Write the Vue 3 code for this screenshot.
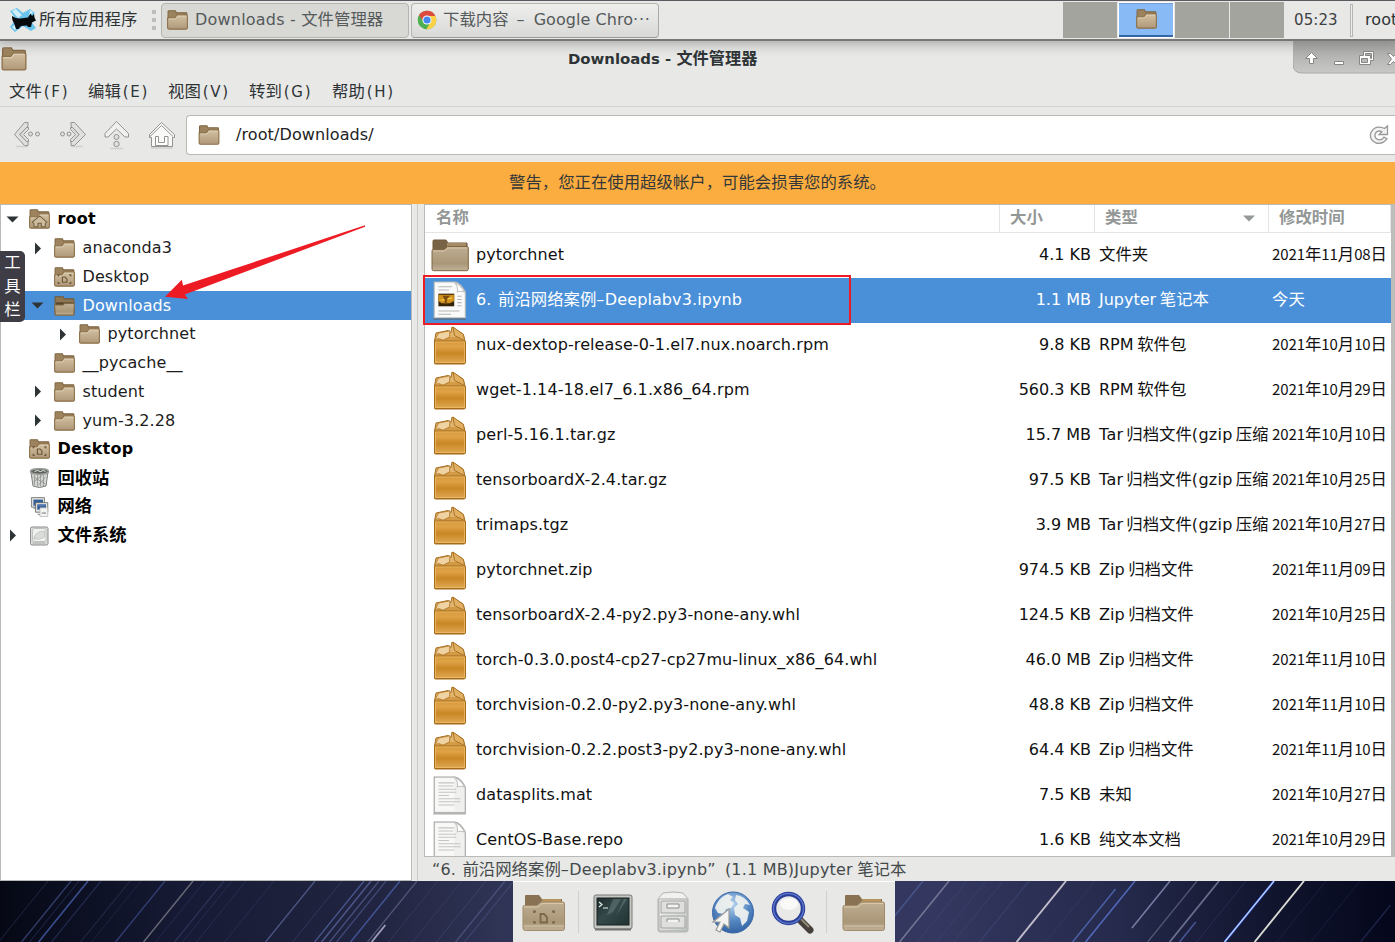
<script setup>
import { h } from 'vue'

// Splits a label into Latin and Han runs so each gets its own face and size.
const Mixed = (props) =>
  h('span', { class: 'mixed' },
    props.t.split(/([\u2e80-\u9fff，。]+)/).filter(Boolean).map((run) =>
      h('span', { class: /[\u2e80-\u9fff，。]/.test(run) ? 'han' : 'lat' }, run)))
Mixed.props = ['t']

const menus = [
  { t: '文件', k: '(F)', w: 79 }, { t: '编辑', k: '(E)', w: 80 }, { t: '视图', k: '(V)', w: 81 },
  { t: '转到', k: '(G)', w: 83 }, { t: '帮助', k: '(H)', w: 80 },
]

const tree = [
  { name: 'root', level: 0, arrow: 'open', icon: 'f-home', bold: true },
  { name: 'anaconda3', level: 1, arrow: 'shut', icon: 'f-small' },
  { name: 'Desktop', level: 1, icon: 'f-desk' },
  { name: 'Downloads', level: 1, arrow: 'open', icon: 'f-open', selected: true },
  { name: 'pytorchnet', level: 2, arrow: 'shut', icon: 'f-small' },
  { name: '__pycache__', level: 1, icon: 'f-small' },
  { name: 'student', level: 1, arrow: 'shut', icon: 'f-small' },
  { name: 'yum-3.2.28', level: 1, arrow: 'shut', icon: 'f-small' },
  { name: 'Desktop', level: 0, icon: 'f-desk', bold: true },
  { name: '回收站', level: 0, icon: 'trash', bold: true },
  { name: '网络', level: 0, icon: 'network', bold: true },
  { name: '文件系统', level: 0, arrow: 'shut', icon: 'disk', bold: true },
]

const tar = 'Tar 归档文件(gzip 压缩'
const zip = 'Zip 归档文件'
const files = [
  ['f-large', 'pytorchnet', '4.1 KB', '文件夹', '2021年11月08日'],
  ['notebook', '', '1.1 MB', 'Jupyter 笔记本', '今天'],
  ['package', 'nux-dextop-release-0-1.el7.nux.noarch.rpm', '9.8 KB', 'RPM 软件包', '2021年10月10日'],
  ['package', 'wget-1.14-18.el7_6.1.x86_64.rpm', '560.3 KB', 'RPM 软件包', '2021年10月29日'],
  ['package', 'perl-5.16.1.tar.gz', '15.7 MB', tar, '2021年10月10日'],
  ['package', 'tensorboardX-2.4.tar.gz', '97.5 KB', tar, '2021年10月25日'],
  ['package', 'trimaps.tgz', '3.9 MB', tar, '2021年10月27日'],
  ['package', 'pytorchnet.zip', '974.5 KB', zip, '2021年11月09日'],
  ['package', 'tensorboardX-2.4-py2.py3-none-any.whl', '124.5 KB', zip, '2021年10月25日'],
  ['package', 'torch-0.3.0.post4-cp27-cp27mu-linux_x86_64.whl', '46.0 MB', zip, '2021年11月10日'],
  ['package', 'torchvision-0.2.0-py2.py3-none-any.whl', '48.8 KB', zip, '2021年11月10日'],
  ['package', 'torchvision-0.2.2.post3-py2.py3-none-any.whl', '64.4 KB', zip, '2021年11月10日'],
  ['paper', 'datasplits.mat', '7.5 KB', '未知', '2021年10月27日'],
  ['paper', 'CentOS-Base.repo', '1.6 KB', '纯文本文档', '2021年10月29日'],
]

// Star trails: x at the top, colour, opacity, width, start y, end y.
const trails = [
  [48, '#39436f', .5, 1, 0, 61], [71, '#46558f', .65, 1.4, 0, 61], [79, '#3b4884', .5, 1, 0, 61], [88, '#4964b4', .75, 1.6, 0, 61],
  [101, '#354379', .5, 1.2, 0, 61], [130, '#434a75', .5, 1, 0, 61], [141, '#363d68', .4, 1, 0, 61], [165, '#4757a0', .65, 1.2, 0, 61],
  [193, '#8d8b94', .7, 1.4, 0, 61], [205, '#343e6b', .5, 1, 0, 61], [224, '#3f4a79', .5, 1.2, 0, 61], [232, '#394575', .4, 1, 0, 61],
  [246, '#3c4678', .4, 1, 0, 61], [274, '#3c4678', .4, 1, 0, 61], [315, '#6673aa', .65, 1.3, 0, 61], [342, '#434c7d', .5, 1, 0, 61],
  [364, '#5567aa', .75, 1.3, 0, 61], [371, '#6572b1', .65, 1.5, 0, 61], [379, '#6873aa', .55, 1.3, 0, 61], [386, '#5462a0', .6, 1.2, 0, 61],
  [400, '#4e65b5', .75, 1.4, 0, 61], [417, '#6a6c92', .65, 1.3, 0, 61], [421, '#c0bddb', .8, 1.8, 44, 61], [438, '#4a4e7c', .4, 1, 0, 61],
  [462, '#484e7b', .4, 1, 0, 61], [486, '#535b8b', .4, 1, 0, 61], [505, '#6570a0', .5, 1.3, 0, 61], [514, '#4c568a', .5, 1.2, 0, 61],
  [923, '#5267a5', .6, 1.5, 0, 61], [949, '#8a89a5', .75, 1.6, 0, 61], [967, '#454d80', .5, 1, 0, 61], [986, '#3f497c', .5, 1, 0, 61],
  [1003, '#444c7f', .5, 1, 0, 61], [1029, '#424f84', .5, 1.2, 0, 61], [1066, '#d0cdd9', .9, 1.9, 0, 61], [1095, '#3b4270', .5, 1, 0, 61],
  [1122, '#5069b5', .85, 1.5, 8, 61], [1135, '#5770c8', .9, 1.5, 0, 61], [1170, '#8d94be', .8, 1.5, 0, 47], [1197, '#6a6c87', .7, 1.3, 0, 61],
  [1219, '#8a8fb0', .7, 1.8, 0, 61], [1229, '#5266ac', .8, 1.5, 41, 61], [1246, '#343d6b', .5, 1, 0, 61], [1274, '#3350df', .8, 2.6, 0, 61],
  [1274, '#c0dcfb', 1, 1.2, 0, 61], [1304, '#e5e5dd', .95, 1.9, 0, 61], [1326, '#252d55', .5, 1, 0, 61], [1360, '#232b52', .5, 1, 0, 61],
  [1410, '#2d3865', .6, 1.2, 24, 61],
]
</script>

<template>
  <div class="screen">
    <svg class="defs" width="0" height="0">
      <defs>
        <linearGradient id="gf" x1="0" y1="0" x2="0" y2="1"><stop offset="0" stop-color="#d3c1a1" /><stop offset="1" stop-color="#af987a" /></linearGradient>
        <linearGradient id="gl" x1="0" y1="0" x2="0" y2="1"><stop offset="0" stop-color="#bfae93" /><stop offset=".7" stop-color="#aa9778" /><stop offset="1" stop-color="#c0b198" /></linearGradient>
        <linearGradient id="gp" x1="0" y1="0" x2="0" y2="1"><stop offset="0" stop-color="#d5983a" /><stop offset=".25" stop-color="#dfa246" /><stop offset=".55" stop-color="#c98725" /><stop offset="1" stop-color="#e0a953" /></linearGradient>
        <linearGradient id="gm" x1="0" y1="0" x2="1" y2="1"><stop offset="0" stop-color="#fdfdfc" /><stop offset="1" stop-color="#c5c8c3" /></linearGradient>
        <linearGradient id="gt" x1="0" y1="0" x2="1" y2="1"><stop offset="0" stop-color="#1d2b2b" /><stop offset=".45" stop-color="#35494a" /><stop offset="1" stop-color="#203333" /></linearGradient>
        <radialGradient id="gg" cx=".5" cy=".3" r=".75"><stop offset="0" stop-color="#b6d2ee" /><stop offset=".55" stop-color="#5486c1" /><stop offset="1" stop-color="#2f5e9f" /></radialGradient>
        <linearGradient id="gn" x1="0" y1="0" x2="1" y2="0"><stop offset="0" stop-color="#050814" /><stop offset=".13" stop-color="#161a34" /><stop offset=".27" stop-color="#222541" /><stop offset=".37" stop-color="#313557" /><stop offset=".67" stop-color="#34375f" /><stop offset=".8" stop-color="#262a4c" /><stop offset=".91" stop-color="#11152e" /><stop offset="1" stop-color="#04071b" /></linearGradient>
        <symbol id="f-small" viewBox="0 0 20 19">
          <path d="M1 17V1.500q0-.8.8-.8h6.200l1 2h9.200q.8 0 .8.8V17z" fill="#9c835e" stroke="#806744" />
          <path d="M.6 7.500h6.900l2-2.700h8.700q1.200 0 1.200 1.200v11q0 1.200-1.200 1.200H1.800Q.6 18.200.6 17V8z" fill="url(#gf)" stroke="#8c7048" />
          <path d="M1.700 8.500H8l2-2.700h8.300" fill="none" stroke="#e0d3bd" stroke-width=".8" />
        </symbol>
        <symbol id="f-home" viewBox="0 0 20 19"><use href="#f-small" /><path d="M3.200 12.500l6.900-6 6.900 6-1.500 1.200v3.100h-3.800v-3.200H8.500v3.200H4.700v-3.100z" fill="#cdbc9f" stroke="#75603f" stroke-width="1" /></symbol>
        <symbol id="f-desk" viewBox="0 0 20 19"><use href="#f-small" /><path d="M4 9V7.500h1.500M14.500 7.500H16V9M4 14v1.500h1.500M14.500 15.500H16V14M8 9.500h2.500l1.800 1.800V14.500H8z" fill="none" stroke="#6c5839" stroke-width="1.100" /></symbol>
        <symbol id="f-open" viewBox="0 0 20 19"><path d="M1 17V1.500q0-.8.8-.8h7l1 2h8.400q.8 0 .8.800V17z" fill="#8e7652" stroke="#705a39" /><path d="M2 6h16v4H2z" fill="#59472d" /><path d="M.6 8.500h8L10 7h9.400l-.6 11.200H1.200z" fill="url(#gl)" stroke="#806945" /></symbol>
        <symbol id="f-large" viewBox="0 0 38 33">
          <path d="M2 30V2q0-1 1-1h12l2 3h19v26z" fill="#796347" stroke="#71593b" /><path d="M16 4h19v4H16z" fill="#a58c66" />
          <path d="M1 12q0-1.500 1.500-1.500H13l3.500-3H36q1.300 0 1.300 1.300V30q0 1.700-1.700 1.700H2.500Q1 31.700 1 30z" fill="url(#gl)" stroke="#80653f" />
          <path d="M2 12h11.500l3.500-3h19" fill="none" stroke="#d3c3a9" />
        </symbol>
        <symbol id="f-dock" viewBox="0 0 44 39">
          <path d="M3 30V3q0-1 1-1h13l3 4h20v24z" fill="#897253" /><path d="M20 6h19v3H20z" fill="#b5945e" />
          <path d="M1 14q0-1.500 1.500-1.500H15l4-3.500h22q1.500 0 1.500 1.500V35q0 2.500-2 2.500H3.500Q1 37.500 1 35z" fill="url(#gl)" stroke="#a08a69" />
          <path d="M2 14h14l4-3.500h21" fill="none" stroke="#dac8a8" /><path d="M2 33h40" stroke="#d3c4ab" />
        </symbol>
        <symbol id="f-dock-desk" viewBox="0 0 44 39"><use href="#f-dock" /><path d="M12 20v-1.500h2M30 18.500h2V20M12 28v1.500h2M30 29.500h2V28M18.500 21h3.500l3 3v5.500h-6.500z" fill="none" stroke="#7b6849" stroke-width="1.800" /></symbol>
        <symbol id="package" viewBox="0 0 34 39">
          <path d="M1.500 15l1.500-8 12-2.500 3 2 1-5.500 11 7 2 7v22q0 1-1 1H2.500q-1 0-1-1z" fill="#e2b671" stroke="#a56d1d" />
          <path d="M4 15l2-4h21l3 4z" fill="#d29a45" />
          <path d="M2 14L5.500 7 17 4.800 16.500 11 10 14.200 5.500 12.500z" fill="#efd3a3" stroke="#b37a2c" stroke-width=".9" />
          <path d="M20 1l10.500 7.500 1 6L21.500 9.500z" fill="#e2b063" stroke="#a56d1d" stroke-width=".9" />
          <rect x="1.500" y="15" width="31" height="22.500" rx="1" fill="url(#gp)" stroke="#a46b1b" /><path d="M2.500 16h29v20.500h-29z" fill="none" stroke="#edbb6b" stroke-width=".8" />
        </symbol>
        <symbol id="paper" viewBox="0 0 34 37">
          <path d="M2 1h20q5 1 9.500 9.500V35H2z" fill="#f0f1ef" stroke="#9fa19e" /><path d="M3 2h18v31H3z" fill="#fff" opacity=".5" /><path d="M21 1.300q4 3 3 9 4-1.500 7 .5-4-8-10-9.500z" fill="#fff" stroke="#c1c3c0" />
          <path d="M6 6.500h15M6 9.500h14M6 12.500h17M6 15.500h17M6 18.500h10M6 21.500h21M6 24.500h21M6 27.500h15" stroke="#c3c5c3" /><path d="M1 36h31" stroke="#777" opacity=".6" />
        </symbol>
        <symbol id="notebook" viewBox="0 0 34 37">
          <path d="M2 1h20q5 1 9.500 9.500V35H2z" fill="#fafafa" stroke="#b9bbb8" /><path d="M21 1.300q4 3 3 9 4-1.500 7 .5-4-8-10-9.500z" fill="#fff" stroke="#c1c3c0" />
          <path d="M6 5.500h13M6 8.500h10M24 14.500h4M24 17.500h4M24 20.500h4M24 23.500h4M6 28.500h20M6 31.500h12" stroke="#b4b6b4" /><path d="M6 12h15v12H6z" fill="#342308" /><path d="M6 13h15v6l-4 2H9l-3-2z" fill="#d0901f" /><path d="M10 14h7l-3 3v5h-2v-4z" fill="#7a4b10" /><path d="M8 18h4M15 17l4-1" stroke="#f7d54b" /><path d="M1 36h31" stroke="#565e66" />
        </symbol>
        <symbol id="trash" viewBox="0 0 20 20"><path d="M1.500 4l2 14q6 3 13 0l2-14z" fill="#d5d7d3" stroke="#7d807c" /><path d="M5 7v10M8 7v11M11 7v11M14 7v11M4 9l12 7M4 14l9-7M9 17l7-8" stroke="#8f928f" stroke-width=".8" /><ellipse cx="10" cy="3.500" rx="9" ry="2.800" fill="#5b605c" stroke="#999c97" stroke-width="1.500" /><path d="M5 3.500l3-1 3 1 3-1 2 1" stroke="#e7e8e7" fill="none" /></symbol>
        <symbol id="network" viewBox="0 0 20 23"><path d="M.7.700h15v11H.7zM3 13h7" fill="#dfe1dc" stroke="#747873" /><path d="M3 3h11v7H3z" fill="#335f9e" /><path d="M5.500 6.500h14v11h-14zM8 20h6" fill="#e5e7e2" stroke="#646962" /><path d="M7.500 8.500h10v6h-10z" fill="#204d91" /><path d="M8 9h9v2H8z" fill="#527cb2" /><path d="M10.500 12.500h9v10h-9z" fill="#f4f4f2" stroke="#bbb" /><path d="M12.500 17.500h5v2h-5z" fill="#aaa" /></symbol>
        <symbol id="disk" viewBox="0 0 20 20"><path d="M2.500 1h14.500q1.500 0 1.500 1.500v15q0 1.500-1.500 1.500H2.500Q1 19 1 17.500v-15Q1 1 2.500 1z" fill="#dcdedb" stroke="#888c88" /><rect x="3" y="2.500" width="13.500" height="13" rx="2" fill="#f1f2f0" stroke="#c0c2bf" /><path d="M4 13q2-8 11-8v6q-4 3-11 2z" fill="#dadcd9" stroke="#bfc2be" stroke-width=".8" /><path d="M3 17h13" stroke="#aaa" /></symbol>
      </defs>
    </svg>

    <header class="panel">
      <svg class="xfce" width="30" height="26" viewBox="0 0 30 26">
        <path d="M2 4l7-3 6 5 7-4 5 4-5 7 6 8-5 3-8-5-8 6-5-5 6-8z" fill="#69c4ed" /><path d="M4 4l4-2 6 6-4 3zM22 3l3 2-4 5M4 20l5-4 3 2-5 5z" fill="#d1effa" />
        <path d="M4 9q5 3 8 2.500l8-1 2.500-4 1.500 2.500 2-2 .5 3.500 1.500 3-4 2-1 4.500h-3l-1-1.500-6 .5-2.500 3H8l-2-6Q4 14 4 9z" fill="#080b0e" />
      </svg>
      <span class="apps"><Mixed t="所有应用程序" /></span>
      <span class="grip"><i></i><i></i><i></i></span>
      <div class="task on"><svg width="21" height="20"><use href="#f-small" /></svg><Mixed t="Downloads - 文件管理器" /></div>
      <div class="task chrome">
        <svg width="20" height="20" viewBox="0 0 20 20"><circle cx="10" cy="10" r="9.300" fill="#4caf50" /><path d="M10 .7A9.300 9.300 0 0 1 18.400 6H10a4.200 4.200 0 0 0-4 5L2 5.300A9.300 9.300 0 0 1 10 .7z" fill="#dd4b3e" /><path d="M18.400 6A9.300 9.300 0 0 1 9.500 19.300l4-7.200A4.200 4.200 0 0 0 12 6z" fill="#fdd247" /><circle cx="10" cy="10" r="4.600" fill="#fff" /><circle cx="10" cy="10" r="3.600" fill="#4688ef" /></svg>
        <span><Mixed t="下载内容" /><span class="dash">–</span>Google Chro<span class="dots">···</span></span>
      </div>
      <div class="pager"><i></i><i class="cur"><svg width="21" height="20"><use href="#f-small" /></svg></i><i></i><i></i></div>
      <span class="clock">05:23</span><span class="sep"></span><span class="user">root</span>
    </header>

    <div class="titlebar">
      <svg class="wicon" width="26" height="24"><use href="#f-small" /></svg>
      <b class="wtitle"><Mixed t="Downloads - 文件管理器" /></b>
      <svg class="wbtns" width="102" height="33" viewBox="0 0 102 33">
        <defs><linearGradient id="gb" x1="0" y1="0" x2="0" y2="1"><stop offset="0" stop-color="#969694" /><stop offset=".45" stop-color="#b3b3b1" /><stop offset="1" stop-color="#c8c8c6" /></linearGradient></defs>
        <path d="M0-1V23q0 9 9 9h94V-1z" fill="url(#gb)" stroke="#aaa" />
        <g fill="#fff" stroke="#878785"><path d="M18.500 11.500l6 6h-4v5h-4v-5h-4z" /><path d="M41.500 20.500h9v3h-9z" /><path fill-rule="evenodd" d="M70.500 10.500h10v9h-3v4h-11v-9h4zM72.500 12.500v2h5v3h1v-5zM68.500 17.500v4h6v-4z" /><path d="M94.500 12.500l3 0 3 3 3-3v11l-3-3-3 3h-3l4-5.500z" /></g>
      </svg>
    </div>

    <nav class="menu"><span v-for="m in menus" :key="m.k" :style="{ width: m.w + 'px' }"><Mixed :t="m.t" /><span class="key">{{ m.k }}</span></span></nav>

    <div class="toolbar">
      <svg class="nav" width="180" height="40" viewBox="0 0 180 40">
        <g fill="#e0e0de" stroke="#939391">
          <path d="M24.500 7.500h3.500v3.500l-8.500 8.500 8.500 7.500v3.500h-3.500L14.500 19.500z" /><path d="M26.500 12.500h2v2l-5 5 5 5v2h-2l-6.500-7z" /><circle cx="30.500" cy="19" r="2" /><circle cx="37.500" cy="19" r="2" />
          <path d="M74.500 7.500H71v3.500l8 8.500-8 7.500v3.500h3.500l11-11z" /><path d="M72.500 12.500h-2v2l5 5-5 5v2h2l6.500-7z" /><circle cx="62.500" cy="19" r="2" /><circle cx="69" cy="19" r="2" />
          <path d="M116.500 6.500l12 12v3.500h-3.500l-8.500-8-8.500 8H105v-3.500z" fill="#f0f0ee" /><circle cx="116.500" cy="22" r="2.500" /><circle cx="116.500" cy="29" r="2.700" />
          <path d="M161.500 7.500l13 12v3h-2v9h-21v-9h-2v-3z" fill="#f9f9f8" /><path d="M150 21.500l11.500-11 11.500 11" fill="none" /><path d="M155.500 21.500h3v6h6v-6h3.500v9h-12.500z" fill="#fff" />
        </g>
        <path d="M16 31.500h12M71 31.500h12M110 33.500h13M151 33h22" stroke="#bbb" stroke-width="1.500" opacity=".5" />
      </svg>
      <div class="address">
        <svg width="22" height="20"><use href="#f-small" /></svg><span>/root/Downloads/</span>
        <svg class="reload" width="22" height="22" viewBox="0 0 22 22"><path d="M19.500 2v8.500H11l2.800-2.800q-4.300-1.900-6.300 1.500-1.500 4 1.500 6 4.500 2 7-2l3 1.500q-4 6-11 4.300-7.500-3.500-5-10.500 4-8 13.500-4z" fill="#f2f2f2" stroke="#999" stroke-width="1.300" /></svg>
      </div>
    </div>

    <div class="warning"><Mixed t="警告，您正在使用超级帐户，可能会损害您的系统。" /></div>

    <main class="body">
      <aside class="tree">
        <div v-for="(n, i) in tree" :key="i" class="node" :class="[{ sel: n.selected, bold: n.bold }, 'l' + n.level]">
          <span class="twist"><svg v-if="n.arrow" width="13" height="13" viewBox="0 0 13 13"><path :d="n.arrow === 'open' ? 'M.5 3.500h12l-6 6z' : 'M4 .5v12l6-6z'" fill="#2e3436" /></svg></span>
          <svg class="ico" width="21" height="20"><use :href="'#' + n.icon" /></svg>
          <Mixed :t="n.name" />
        </div>
      </aside>
      <div class="handle"></div>
      <section class="pane">
        <div class="list">
          <div class="cols head"><span class="h1"><Mixed t="名称" /></span><span><Mixed t="大小" /></span><span class="ht"><Mixed t="类型" /><svg width="12" height="7"><path d="M0 .5h12l-6 6z" fill="#949897" /></svg></span><span><Mixed t="修改时间" /></span></div>
          <div v-for="(f, i) in files" :key="i" class="cols file" :class="{ sel: i === 1 }">
            <span class="name"><svg :class="f[0]" width="38" height="39"><use :href="'#' + f[0]" /></svg>
              <span v-if="f[1]" class="fname">{{ f[1] }}</span><span v-else class="fname"><span class="six">6.</span><Mixed t="前沿网络案例" /><span class="hyp">–</span>Deeplabv3.ipynb</span>
            </span>
            <span class="size">{{ f[2] }}</span><span class="type" :class="{ clip: f[3] === tar }"><Mixed :t="f[3]" /></span><span class="date"><Mixed :t="f[4]" /></span>
          </div>
        </div>
        <div class="status"><span class="q">“</span><span class="six">6.</span><Mixed t="前沿网络案例" /><span class="hyp">–</span>Deeplabv3.ipynb” <span class="meta">(1.1 MB)</span><Mixed class="kind" t="Jupyter 笔记本" /></div>
      </section>
    </main>

    <footer class="desktop">
      <svg class="sky" width="1395" height="61" viewBox="0 0 1395 61"><rect width="1395" height="61" fill="url(#gn)" />
        <line v-for="(s, i) in trails" :key="i" :x1="s[0] - s[4] * .81" :y1="s[4]" :x2="s[0] - s[5] * .81" :y2="s[5]" :stroke="s[1]" :stroke-opacity="s[2]" :stroke-width="s[3]" />
      </svg>
      <div class="dock">
        <svg width="44" height="39"><use href="#f-dock-desk" /></svg>
        <i></i>
        <svg class="term" width="40" height="39" viewBox="0 0 40 39"><rect x="1" y="2" width="38" height="34" rx="2" fill="#c5c7c3" stroke="#777a75" /><rect x="4" y="5" width="32" height="27" fill="url(#gt)" stroke="#182020" /><path d="M20 6h8l-8 13-6 3zM31 6h3l-11 17z" fill="#7c9291" opacity=".4" /><path d="M6 9l3 2.500L6 14M10 15h5" fill="none" stroke="#e5efe9" stroke-width="1.200" /><path d="M2 36.500h36" stroke="#70736e" stroke-width="2" /></svg>
        <svg class="cab" width="34" height="43" viewBox="0 0 34 43"><path d="M2 8l5-6q10-2 20 0l5 6v31q0 2-2 2H4q-2 0-2-2z" fill="#f1f2f0" stroke="#b0b2ae" /><rect x="3" y="8" width="28" height="32" rx="1" fill="url(#gm)" stroke="#a5a7a4" /><path d="M5 10h24v12H5zM5 25h24v12H5z" fill="#dfe0dd" stroke="#a0a39f" /><path d="M11 13h12v4H11zM11 31v-3h12v3" fill="#f3f4f2" stroke="#888c87" /></svg>
        <svg class="globe" width="43" height="43" viewBox="0 0 43 43"><circle cx="22" cy="21.500" r="20.500" fill="url(#gg)" stroke="#3a66a6" /><path d="M5 14q5-9 12-11l5 3-3 3 4 3-3 5-5 1-2 5-6-1-3-5zM25 4q9 1 14 10l-5-1-2 4 6 4-2 9-5 5-2-8-5-3-1-7 4-4-3-4z" fill="#f0f2ef" opacity=".93" /><path d="M18 18v19l-5-4-4 8-4-2 4-8H2z" fill="#f3f4f2" stroke="#9a9c99" stroke-width="1.200" /></svg>
        <svg class="lens" width="43" height="43" viewBox="0 0 43 43"><path d="M29 29l10 10" stroke="#45403b" stroke-width="7" stroke-linecap="round" /><path d="M29 27l9 9" stroke="#958a78" stroke-width="2" /><circle cx="17.500" cy="17.500" r="14.500" fill="#e9eae8" stroke="#2b3e96" stroke-width="4.500" /><circle cx="17.500" cy="17.500" r="15" fill="none" stroke="#5a74cb" stroke-width="1.400" /><ellipse cx="18" cy="13" rx="9" ry="6" fill="#fff" opacity=".7" /></svg>
        <i></i>
        <svg class="last" width="44" height="39"><use href="#f-dock" /></svg>
      </div>
    </footer>

    <div class="mark"></div>
    <svg class="arrow" width="204" height="78" viewBox="0 0 204 78"><path d="M204.500.200L22 60.500l-1.200-5.700L4 71.800 27 74l-3.200-4.500L204.500 1.500z" fill="#ed1c24" /></svg>
    <div class="side-tab"><Mixed t="工" /><Mixed t="具" /><Mixed t="栏" /></div>
  </div>
</template>

<style>
html, body { overflow: hidden; background: #e8e8e6; }
</style>

<style scoped>
.screen { position: relative; width: 1395px; height: 942px; overflow: hidden; display: flex; flex-direction: column; background: #e8e8e6; color: #2e3436; font: 16px/20px "DejaVu Sans", "Noto Sans CJK SC", sans-serif; letter-spacing: .1px; white-space: nowrap; }
.screen svg { display: block; flex: none; }
.screen .defs { position: absolute; }
:deep(.mixed) { white-space: pre; }
:deep(.han) { font-family: "Noto Sans CJK SC", sans-serif; font-size: 16.4px; line-height: 18px; letter-spacing: 0; }
.panel { height: 41px; box-sizing: border-box; border-top: 1px solid #5d5961; border-bottom: 2px solid #777775; display: flex; align-items: center; flex: none; position: relative; z-index: 1; box-shadow: 0 2px 9px #8888; }
.panel > * { flex-shrink: 0; }
.xfce { margin-left: 8px; }
.apps { margin: -2px 0 0 1px; width: 106px; }
.grip { display: grid; gap: 4px; width: 16px; padding-left: 7px; box-sizing: border-box; }
.grip i { width: 4px; height: 4px; background: #bdbdbb; }
.task { box-sizing: border-box; height: 35px; border: 1px solid #b4b4b1; border-radius: 4px; width: 248px; display: flex; align-items: center; padding: 0 0 2px 5px; gap: 7px; background: #d8d8d5; color: #555a5b; letter-spacing: .2px; }
.task svg { margin-top: 1px; }
.task.chrome { margin-left: 2px; background: linear-gradient(#eeeeed, #d9d9d7); border-bottom-color: #999; border-right-color: #aaa; gap: 6px; letter-spacing: .05px; }
.dash { margin: 0 9px 0 8px; }
.dots { letter-spacing: .8px; }
.pager { display: flex; gap: 1px; margin-left: 404px; width: 221px; height: 36px; }
.pager i { flex: 1; background: #a4a49f; display: flex; align-items: center; justify-content: center; }
.pager .cur { background: #88bbf6; border: 1px solid #fff; box-shadow: inset 0 -2px #3465a4, inset 0 1px #6f9fd6; }
.pager .cur svg { margin-top: -2px; }
.clock { margin: -1px 0 0 10px; width: 54px; font-size: 15px; letter-spacing: .1px; color: #3c4143; }
.sep { width: 3px; height: 33px; margin-left: 2px; border: 1px solid #b5b5b3; background: #eee; box-sizing: border-box; }
.user { margin: -1px 0 0 12px; }
.titlebar { height: 36px; display: flex; align-items: flex-start; flex: none; background: linear-gradient(#d7d7d5, #e8e8e6 45%); position: relative; }
.wicon { margin: 6px 0 0 1px; }
.wtitle { margin: 7px 0 0 541px; width: 725px; font-size: 14.900px; letter-spacing: 0; }
.wtitle :deep(.han) { font-size: 16.200px; }
.menu { display: flex; height: 29px; flex: none; padding-left: 9px; border-bottom: 1px solid #d2d2d0; align-items: center; }
.key { letter-spacing: 1.700px; margin-left: 2px; font-size: 15px; }
.toolbar { height: 55px; flex: none; display: flex; align-items: center; }
.nav { width: 180px; }
.address { margin-left: 6px; flex: 1; height: 40px; box-sizing: border-box; border: 1px solid #b8b8b5; border-right: 0; border-radius: 4px 0 0 4px; background: #fff; display: flex; align-items: center; padding-left: 11px; gap: 16px; color: #222; }
.reload { margin: 0 5px 0 auto; }
.warning { height: 42px; flex: none; background: #fcad3f; display: flex; align-items: center; justify-content: center; color: #343839; padding-bottom: 2px; box-sizing: border-box; }
.body { height: 677px; flex: none; display: flex; }
.tree { width: 412px; box-sizing: border-box; border: 1px solid #b9b9b7; background: #fff; color: #1c1c1c; }
.node { height: 28.750px; display: flex; align-items: center; }
.twist { width: 13px; margin-right: 10px; }
.l0 { padding-left: 5px; } .l1 { padding-left: 30px; } .l2 { padding-left: 55px; }
.node .ico { margin-right: 7.500px; }
.bold { font-weight: bold; color: #000; letter-spacing: .2px; }
.bold :deep(.han) { font-size: 17.300px; }
.node.sel { background: #4a90d9; color: #fff; }
.handle { width: 6px; border-left: 1px solid #eee; border-right: 1px solid #c9c9c7; box-sizing: border-box; }
.pane { flex: 1; min-width: 0; padding-left: 6px; display: flex; flex-direction: column; }
.list { height: 653px; overflow: hidden; box-sizing: border-box; border: 1px solid #b9b9b7; border-right: 4px solid #bdbdbb; background: #fff; color: #111; }
.cols { display: grid; grid-template-columns: 575px 95px 174px 1fr; }
.head { height: 27px; border-bottom: 1px solid #e4e4e2; color: #939796; font-weight: bold; }
.head > span { border-right: 1px solid #e4e4e2; padding: 2px 0 0 10px; }
.head .h1 { padding-left: 11px; }
.head > .ht { display: flex; justify-content: space-between; padding-right: 13px; }
.ht svg { margin-top: 8px; }
.file { height: 45px; align-items: center; padding-bottom: 2px; box-sizing: border-box; }
.file > span { min-width: 0; }
.name { display: flex; align-items: center; padding-left: 6px; }
.name svg { margin-top: 1px; }
.fname { margin-left: 7px; }
.size { text-align: right; padding-right: 4px; letter-spacing: 0; }
.type { padding-left: 4px; line-height: 26px; letter-spacing: 0; word-spacing: -1.500px; }
.type.clip { overflow: hidden; margin-right: 1px; letter-spacing: .3px; }
.date { padding-left: 3px; }
.date :deep(.lat) { font-family: "Noto Sans CJK SC", sans-serif; font-size: 15px; letter-spacing: -.1px; }
.type.clip :deep(.lat) { word-spacing: -2.500px; }
.file.sel { background: #4a90d9; color: #fff; }
.six { display: inline-block; width: 22px; }
.hyp { letter-spacing: .5px; }
.status { height: 24px; padding-left: 8px; line-height: 26px; color: #444a4c; letter-spacing: .15px; }
.meta { margin-left: 4px; letter-spacing: .2px; }
.kind { word-spacing: -1px; letter-spacing: .2px; }
.desktop { height: 61px; position: relative; display: flex; justify-content: center; }
.sky { position: absolute; inset: 0; }
.dock { position: relative; width: 382px; height: 61px; margin-left: 12px; background: #e8e8e6; border-top: 1px solid #fff; box-sizing: border-box; display: flex; align-items: center; padding-left: 9px; }
.dock i { width: 1px; height: 42px; margin-left: 12px; background: #cfcfcd; }
.term { margin-left: 14px; }
.cab { margin-left: 23px; }
.globe { margin-left: 21px; }
.lens { margin-left: 17px; }
.last { margin-left: 15px; }
.mark { position: absolute; left: 423px; top: 275px; width: 428px; height: 50px; box-sizing: border-box; border: 2px solid #ed1c24; }
.arrow { position: absolute; left: 161px; top: 225px; }
.side-tab { position: absolute; left: 0; top: 251px; width: 25px; height: 71px; border-radius: 0 5px 5px 0; background: #3e3c45; color: #fff; display: flex; flex-direction: column; align-items: center; justify-content: center; line-height: 20px; gap: 2.500px; padding-bottom: 1px; box-sizing: border-box; }
</style>
